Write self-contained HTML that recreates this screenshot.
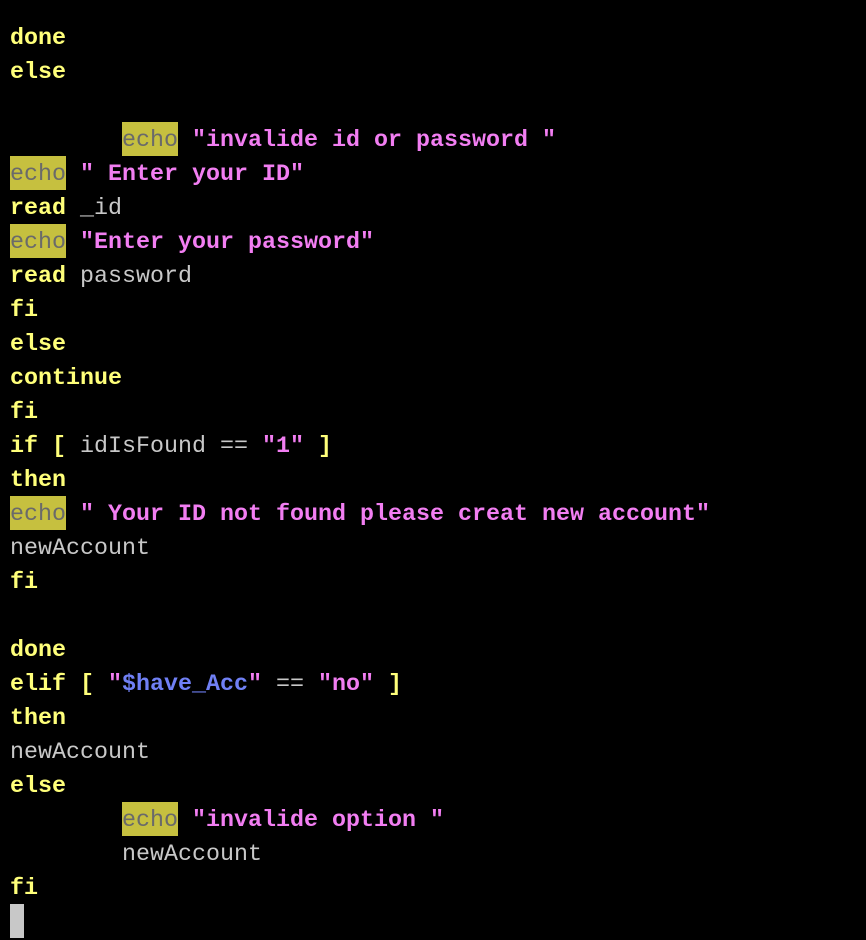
<!DOCTYPE html>
<html><head><meta charset="utf-8"><style>
html,body{margin:0;padding:0;background:#000;width:866px;height:940px;overflow:hidden}
pre{margin:0;position:absolute;left:10px;top:22px;font-family:"Liberation Mono",monospace;font-size:23.33px;line-height:34px;color:#c8c8c8}
.k{color:#ffff7a;font-weight:bold}
.s{color:#f27ef2;font-weight:bold}
.v{color:#7080f5;font-weight:bold}
.e{background:#c6c03f;color:#6a6a6a;display:inline-block;height:34px;position:relative;top:-2px;line-height:38px;vertical-align:top}
.cur{position:absolute;left:10px;top:904px;width:14px;height:34px;background:#c8c8c8}
</style></head><body>
<pre><span class="k">done</span>
<span class="k">else</span>

        <span class="e">echo</span> <span class="s">"invalide id or password "</span>
<span class="e">echo</span> <span class="s">" Enter your ID"</span>
<span class="k">read</span> _id
<span class="e">echo</span> <span class="s">"Enter your password"</span>
<span class="k">read</span> password
<span class="k">fi</span>
<span class="k">else</span>
<span class="k">continue</span>
<span class="k">fi</span>
<span class="k">if [</span> idIsFound == <span class="s">"1"</span> <span class="k">]</span>
<span class="k">then</span>
<span class="e">echo</span> <span class="s">" Your ID not found please creat new account"</span>
newAccount
<span class="k">fi</span>

<span class="k">done</span>
<span class="k">elif [</span> <span class="s">"<span class="v">$have_Acc</span>"</span> == <span class="s">"no"</span> <span class="k">]</span>
<span class="k">then</span>
newAccount
<span class="k">else</span>
        <span class="e">echo</span> <span class="s">"invalide option "</span>
        newAccount
<span class="k">fi</span></pre>
<div class="cur"></div>
</body></html>
